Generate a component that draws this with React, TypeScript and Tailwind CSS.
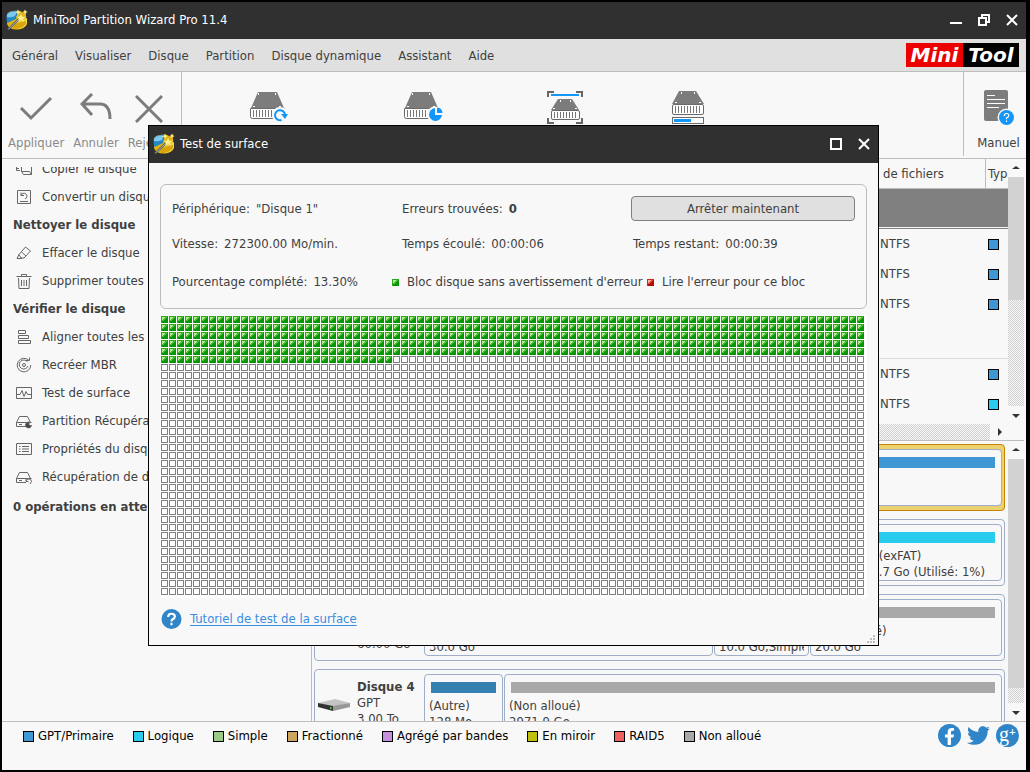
import type { ReactNode } from "react";
import { FaFacebookF, FaTwitter } from "react-icons/fa";
import clsx from "clsx";

const HATCH =
  "bg-[conic-gradient(#d0d0d0_25%,#f8f8f8_0_50%,#d0d0d0_0_75%,#f8f8f8_0)] bg-[length:2px_2px]";

const menus = ["Général", "Visualiser", "Disque", "Partition", "Disque dynamique", "Assistant", "Aide"];

const legend = [
  { label: "GPT/Primaire", color: "bg-[#3f97d4]" },
  { label: "Logique", color: "bg-[#29ccec]" },
  { label: "Simple", color: "bg-[#99cb85]" },
  { label: "Fractionné", color: "bg-[#cca65c]" },
  { label: "Agrégé par bandes", color: "bg-[#c48fdb]" },
  { label: "En miroir", color: "bg-[#bfbf10]" },
  { label: "RAID5", color: "bg-[#f0605f]" },
  { label: "Non alloué", color: "bg-[#a9a9a9]" },
];

const AppIcon = () => (
  <svg width="22" height="22" viewBox="0 0 22 22" className="shrink-0">
    <path d="M1 6 C1 2 9 1 14 2 L20 5 V15 C20 19 14 21 9 20.500 C4 20 1 17 1 14Z" fill="#e3b411" />
    <path d="M0.500 7 C0.500 3 6 1.500 12 2 L10 10 L1.500 14 C0.700 12 0.500 10 0.500 7Z" fill="#2486c4" />
    <path d="M1 6 C2 3 7 2 11 2.500 L9 7 C6 8.500 3 8.500 1 8Z" fill="#7cc8ee" />
    <path d="M9 12 L21 9 V15 C20 18 15 20 10 20Z" fill="#f7d63c" />
    <path d="M7 15 L20 12 V15 C18 18 13 20 8 20Z" fill="#d9a50c" />
    <path d="M2 20.500 L14 9" stroke="#48545a" strokeWidth="2" />
    <path d="M2.500 20 L13 10" stroke="#c5d0d4" strokeWidth="0.800" />
    <path d="M15 4 L16.500 7.500 L20.500 7.500 L17.500 10 L18.500 13.500 L15 11.500 L12 13.500 L12.800 10 L10 7.500 L13.700 7.300Z" fill="#fff08a" stroke="#b58a12" strokeWidth="0.300" />
    <path d="M12 0.500 L13 2.500 L15 3 L13 4 L12.500 6 L11 4 L9 3.500 L11 2.500Z M19 0.500 L20 2.200 L21.500 3 L20 4 L19 5.500 L18 4 L16.500 3 L18 2.200Z" fill="#ffe77a" />
  </svg>
);

const Logo = () => (
  <div className="flex h-6 items-center text-xl font-bold italic leading-6 text-white font-['DejaVu_Sans',sans-serif]">
    <span className="w-[57px] bg-[#ec0000] text-center leading-6">Mini</span>
    <span className="w-14 bg-black text-center leading-6">Tool</span>
  </div>
);

/* drive seen from the front, shared by the toolbar buttons */
const Drive = () => (
  <g>
    <path d="M8 0 H27 L34 16 H1Z" fill="#7c7c7c" />
    <path d="M8 1 h1 v2 h-1z M25 1 h1 v2 h-1z M3 14 h2 v1 h-2z M29 14 h2 v1 h-2z" fill="#fff" />
    <path d="M0.500 16.500 H34.500 V24.500 Q34.500 26.500 32.500 26.500 H2.500 Q0.500 26.500 0.500 24.500Z" fill="#fff" stroke="#6a6a6a" />
    <path d="M3.500 18 V25 M6.500 18 V25 M9.500 18 V25 M12.500 18 V25 M15.500 18 V25 M18.500 18 V25 M21.500 18 V25 M24.500 18 V25 M27.500 18 V25 M30.500 18 V25" stroke="#777" />
  </g>
);

const DriveRefresh = () => (
  <svg width="38" height="30" viewBox="0 0 38 30">
    <Drive />
    <circle cx="30" cy="23" r="8" fill="#f8f8f8" />
    <path d="M31.500 28 A5 5 0 1 1 35 22.500" fill="none" stroke="#1296fa" strokeWidth="2" />
    <path d="M31 22 H38 L35 27Z" fill="#1296fa" />
  </svg>
);

const DrivePie = () => (
  <svg width="39" height="30" viewBox="0 0 39 30">
    <Drive />
    <circle cx="31" cy="22.500" r="8" fill="#f8f8f8" />
    <path d="M31 16 V23 H38 A6.500 6.500 0 1 1 31 16Z" fill="#1296fa" />
    <path d="M33 15.500 A6 6 0 0 1 38.500 21 H33Z" fill="#1296fa" />
  </svg>
);

const DriveScan = () => (
  <svg width="36" height="33" viewBox="0 0 36 33">
    <path d="M7 1 H1 V6 M29 1 H35 V6 M7 32 H1 V27 M29 32 H35 V27" fill="none" stroke="#666" strokeWidth="2" />
    <rect x="4" y="3" width="28" height="2" fill="#1296fa" />
    <path d="M11 8 H25 L32 19 H4Z" fill="#7c7c7c" />
    <path d="M13 9 h1 v2 h-1z M23 9 h1 v2 h-1z M6 17 h2 v1 h-2z M28 17 h2 v1 h-2z" fill="#fff" />
    <rect x="4.500" y="19.500" width="28" height="9" rx="1.500" fill="#fff" stroke="#6a6a6a" />
    <path d="M7.500 21 V27 M10.500 21 V27 M13.500 21 V27 M16.500 21 V27 M19.500 21 V27 M22.500 21 V27 M25.500 21 V27 M28.500 21 V27" stroke="#777" />
  </svg>
);

const DriveProgress = () => (
  <svg width="32" height="33" viewBox="0 0 32 33">
    <path d="M7 0 H24 L32 13 H0Z" fill="#7c7c7c" />
    <path d="M9 1 h1 v2 h-1z M22 1 h1 v2 h-1z M3 11 h2 v1 h-2z M27 11 h2 v1 h-2z" fill="#fff" />
    <rect x="0.500" y="13.500" width="31" height="10" rx="1.500" fill="#fff" stroke="#6a6a6a" />
    <path d="M3.500 15 V22 M6.500 15 V22 M9.500 15 V22 M12.500 15 V22 M15.500 15 V22 M18.500 15 V22 M21.500 15 V22 M24.500 15 V22 M27.500 15 V22" stroke="#777" />
    <rect x="0.500" y="26.500" width="31" height="6" fill="#fff" stroke="#6a6a6a" />
    <rect x="2" y="28" width="17" height="3" fill="#1296fa" />
  </svg>
);

const ManualIcon = () => (
  <svg width="30" height="35" viewBox="0 0 30 35">
    <rect width="24" height="31" rx="2" fill="#7c7c7c" />
    <path d="M3 5.500 H11 M3 9.500 H21 M3 13.500 H21 M3 17.500 H15" stroke="#fff" />
    <circle cx="22.500" cy="27.500" r="9" fill="#f8f8f8" />
    <circle cx="22.500" cy="27.500" r="7.500" fill="#1296fa" />
    <path d="M20.300 26 Q20.300 23.500 22.500 23.500 Q24.800 23.500 24.800 25.500 Q24.800 27 22.500 28 V29.300 M22.500 30.500 V32" fill="none" stroke="#fff" strokeWidth="1.200" />
  </svg>
);

const SideIcon = ({ children }: { children: ReactNode }) => (
  <svg width="16" height="16" viewBox="0 0 16 16" fill="none" stroke="#666" className="shrink-0">
    {children}
  </svg>
);

const driveBody = <path d="M0.500 9.500 L3.500 3.500 H11.500 L14.500 9.500 M0.500 9.500 H15.500 M0.500 9.500 V13.500 H10 M3 11.500 H6" />;

const sideItems: { label: string; icon?: ReactNode }[] = [
  { label: "Copier le disque", icon: <path d="M4 4.500 H0.500 V9.500 H4 M1 7.500 H3 M5.500 2 V10.500 L7.500 13.500 H15.500 V2 M5.500 10.500 H13.500 L15.500 13.500" /> },
  { label: "Convertir un disque", icon: <path d="M1.500 1.500 H14.500 V14.500 H1.500Z M4 12.500 H12 M5 6.500 A3 3 0 1 1 9 10 M5 3.500 V6.500 H8" /> },
  { label: "Nettoyer le disque" },
  { label: "Effacer le disque", icon: <path d="M3 9.500 L9.500 2 L14.500 6 L8 13 H5Z M5.500 7 L10 11 M3 9.500 L1 13.500 H6" /> },
  { label: "Supprimer toutes les", icon: <path d="M0.500 3.500 H15.500 M5.500 3 V1.500 H10.500 V3 M2.500 5 L3 15.500 H13 L13.500 5 M5.500 7 V13 M8 7 V13 M10.500 7 V13" /> },
  { label: "Vérifier le disque" },
  { label: "Aligner toutes les partitions", icon: <path d="M2.500 1.500 H9.500 V4.500 H2.500Z M2.500 6.500 H12.500 V9.500 H2.500Z M2.500 11.500 H14.500 V14.500 H2.500Z" /> },
  {
    label: "Recréer MBR",
    icon: (
      <>
        <path d="M13 3.500 A6.800 6.800 0 1 0 14.800 8 M10 3.500 H13.500 V0.500 M11.500 5 A4.500 4.500 0 1 0 12 9" />
        <circle cx="8" cy="8" r="1.500" />
      </>
    ),
  },
  { label: "Test de surface", icon: <path d="M0.500 2.500 H15.500 V13.500 H0.500Z M1 9.500 H4 L6 5.500 L8 11.500 L10 6.500 L11.500 9.500 H15" /> },
  { label: "Partition Récupération", icon: <>{driveBody}<path d="M13 9 a3 3 0 1 0 2.500 3.500 h-2.500z" fill="#444" /></> },
  { label: "Propriétés du disque", icon: <path d="M0.500 2.500 H15.500 V13.500 H0.500Z M3 5.500 H4.500 M6 5.500 H13 M3 8 H4.500 M6 8 H13 M3 10.500 H4.500 M6 10.500 H13" /> },
  { label: "Récupération de données", icon: <>{driveBody}<path d="M10 12 A2.800 2.800 0 0 1 15.500 12.500 L14 15 M10 10 V12.500 H12.500" /></> },
];

const ToolButton = ({ label, className, children }: { label?: string; className?: string; children: ReactNode }) => (
  <button className={clsx("flex flex-col items-center", className)}>
    <span className="flex h-[70px] items-center">{children}</span>
    {label && <span className="-mt-[7px] leading-4">{label}</span>}
  </button>
);

const Arrow = ({ dir, className }: { dir: "up" | "down" | "right"; className?: string }) => (
  <button aria-label={dir} className={clsx("flex shrink-0 items-center justify-center", className)}>
    <svg width="8" height="8" viewBox="0 0 8 8" fill="#333">
      {dir === "up" && <path d="M0 5 L4 2 L8 5Z" />}
      {dir === "down" && <path d="M0 3 L4 7 L8 3Z" />}
      {dir === "right" && <path d="M3 0 L7 4 L3 8Z" />}
    </svg>
  </button>
);

const ScrollBar = ({ thumb }: { thumb: string }) => (
  <div className="flex w-4 shrink-0 flex-col">
    <Arrow dir="up" className="h-[18px]" />
    <div className={clsx("flex-1", HATCH)}>
      <div className={clsx("bg-[#d2d2d2]", thumb)} />
    </div>
    <Arrow dir="down" className="h-[18px]" />
  </div>
);

const Swatch = ({ color }: { color: string }) => (
  <span className={clsx("block size-[11px] border border-black", color)} />
);

const DiskRow = ({ selected }: { selected?: boolean }) => (
  <tr>
    <td colSpan={3} className={clsx("border-b pb-px", selected ? "border-[#808080]" : "border-[#dcdce4]")}>
      <div className={clsx("h-[38px]", selected && "bg-[#808080]")} />
    </td>
  </tr>
);

const FsRow = ({ color }: { color: string }) => (
  <tr className="h-[30px]">
    <td />
    <td className="pl-px">NTFS</td>
    <td className="pl-[2px]">
      <Swatch color={color} />
    </td>
  </tr>
);

const PartitionTable = () => (
  <div className="flex h-[282px] border-b border-[#bdbdbd]">
    <div className="flex min-w-0 flex-1 flex-col justify-between overflow-hidden">
      <table className="w-full table-fixed border-separate border-spacing-0">
        <colgroup>
          <col />
          <col className="w-[107px]" />
          <col className="w-[22px]" />
        </colgroup>
        <thead>
          <tr className="h-[30px]">
            <th className="border-b border-[#bdbdbd]" />
            <th className="border-b border-r border-[#bdbdbd] pl-1 text-left font-normal">de fichiers</th>
            <th className="overflow-hidden border-b border-[#bdbdbd] pl-[2px] text-left font-normal">Type</th>
          </tr>
        </thead>
        <tbody>
          <DiskRow selected />
          <FsRow color="bg-[#3f97d4]" />
          <FsRow color="bg-[#3f97d4]" />
          <FsRow color="bg-[#3f97d4]" />
          <DiskRow />
          <FsRow color="bg-[#3f97d4]" />
          <FsRow color="bg-[#29ccec]" />
        </tbody>
      </table>
      <div className="flex h-4">
        <div className={clsx("flex-1", HATCH)} />
        <Arrow dir="right" className="w-[18px]" />
      </div>
    </div>
    <div className="flex pb-4">
      <ScrollBar thumb="h-[123px]" />
    </div>
  </div>
);

const DiskCard = ({ selected, info, children }: { selected?: boolean; info?: ReactNode; children: ReactNode }) => (
  <div
    className={clsx(
      "flex h-[67px] shrink-0 rounded border py-1 pr-[2px]",
      selected ? "border-[#c88400] bg-[#ecd170]" : "border-[#9fadc8]"
    )}
  >
    <div className="flex w-[109px] shrink-0 items-start leading-4">{info}</div>
    <div className="flex min-w-0 flex-1 gap-px">{children}</div>
  </div>
);

const Partition = ({ bar, className, children }: { bar?: string; className: string; children?: ReactNode }) => (
  <div className={clsx("overflow-hidden rounded border border-[#9fadc8] bg-[#f8f8f8] pt-[7px] leading-4", className)}>
    <div className={clsx("mx-[6px] h-[11px]", bar)} />
    <div className="mx-1 mt-[5px] overflow-hidden whitespace-nowrap">{children}</div>
  </div>
);

const DiskMap = () => (
  <div className="flex min-h-0 flex-1">
    <div className="flex min-w-0 flex-1 flex-col gap-2 overflow-hidden pl-[2px] pr-[3px] pt-[3px]">
      <DiskCard selected>
        <Partition bar="bg-[#3f97d4]" className="flex-1" />
      </DiskCard>
      <DiskCard>
        <Partition bar="bg-[#29ccec]" className="flex-1">
          <div className="flex justify-end pr-3">
            <p>
              (exFAT)
              <br />
              .7 Go (Utilisé: 1%)
            </p>
          </div>
        </Partition>
      </DiskCard>
      <DiskCard info={<p className="mt-[37px] pl-[42px]">60.00 Go</p>}>
        <Partition bar="bg-[#a9a9a9]" className="w-[289px]">
          <br />
          30.0 Go
        </Partition>
        <Partition bar="bg-[#a9a9a9]" className="w-[95px]">
          <br />
          10.0 Go,Simple
        </Partition>
        <Partition bar="bg-[#a9a9a9]" className="flex-1">
          (Non alloué)
          <br />
          20.0 Go
        </Partition>
      </DiskCard>
      <DiskCard
        info={
          <>
            <svg width="34" height="16" viewBox="0 0 34 16" className="mx-[2px] mt-6">
              <path d="M1 5 L18 1 L33 5 L16 9Z" fill="#c4c4c4" />
              <path d="M1 5 L16 8 V13 L1 9Z" fill="#333" />
              <path d="M16 8 L33 5 V9 L16 13Z" fill="#989898" />
              <path d="M13 9 h1.500 v2 h-1.500z" fill="#4fd04f" />
            </svg>
            <p className="mt-[5px] pl-1">
              <b>Disque 4</b>
              <br />
              GPT
              <br />
              3.00 To
            </p>
          </>
        }
      >
        <Partition bar="bg-[#3580b0]" className="w-[79px]">
          (Autre)
          <br />
          128 Mo
        </Partition>
        <Partition bar="bg-[#a9a9a9]" className="flex-1">
          (Non alloué)
          <br />
          2971.9 Go
        </Partition>
      </DiskCard>
    </div>
    <ScrollBar thumb="h-[229px]" />
  </div>
);

const Marker = ({ red }: { red?: boolean }) => (
  <svg width="7" height="7" viewBox="0 0 7 7" shapeRendering="crispEdges">
    <rect width="7" height="7" fill={red ? "#b80c00" : "#0c9408"} />
    <path d="M0 0 H7 V1 H1 V7 H0Z" fill={red ? "#d02818" : "#28a81c"} />
    <path d="M4 1 H6 V2 H4Z M3 2 H5 V3 H3Z M2 3 H4 V4 H2Z M1 4 H3 V5 H1Z" fill={red ? "#e04838" : "#50c038"} />
    <path d="M1 1 H4 V2 H3 V3 H2 V4 H1Z" fill={red ? "#ffb0a0" : "#b0f098"} />
  </svg>
);

/* 88 x 35 blocks on an 8px pitch, 5 full rows and 29 blocks are done */
const BlockMap = () => (
  <svg width="703" height="279" shapeRendering="crispEdges" className="block">
    <defs>
      <pattern id="todo" width="8" height="8" patternUnits="userSpaceOnUse">
        <rect width="8" height="8" fill="#fff" />
        <path d="M0 0 H7 V7 H0Z M1 1 V6 H6 V1Z" fill="#808080" fillRule="evenodd" />
      </pattern>
      <pattern id="done" width="8" height="8" patternUnits="userSpaceOnUse">
        <rect width="8" height="8" fill="#fff" />
        <Marker />
      </pattern>
    </defs>
    <rect width="703" height="279" fill="url(#todo)" />
    <rect width="703" height="40" fill="url(#done)" />
    <rect y="40" width="232" height="8" fill="url(#done)" />
  </svg>
);

const Field = ({ label, children }: { label: string; children: ReactNode }) => (
  <p className="flex gap-[6px]">
    <span>{label}</span>
    <span>{children}</span>
  </p>
);

const SurfaceTest = () => (
  <section role="dialog" aria-label="Test de surface" className="absolute left-[148px] top-[125px] w-[731px] border border-black bg-[#f8f8f8]">
    <header className="flex h-[37px] items-center bg-[#303030] pb-[2px] pl-1 pr-2 text-white">
      <AppIcon />
      <h2 className="ml-[5px] flex-1">Test de surface</h2>
      <button aria-label="Agrandir" className="mr-4 size-3 border-2 border-white" />
      <button aria-label="Fermer">
        <svg width="12" height="12" viewBox="0 0 12 12" stroke="#fff" strokeWidth="2">
          <path d="M1 1 L11 11 M11 1 L1 11" />
        </svg>
      </button>
    </header>
    <div className="px-[11px] pt-[21px]">
      <div className="h-[125px] rounded-md border border-[#bdbdbd] px-[11px] pt-[11px]">
        <div className="grid grid-cols-[230px_229px_1fr] items-center">
          <Field label="Périphérique:">"Disque 1"</Field>
          <Field label="Erreurs trouvées:">
            <b>0</b>
          </Field>
          <button className="h-[25px] rounded-sm border border-[#808080] bg-[#e0e0e0]">Arrêter maintenant</button>
        </div>
        <div className="mt-[13px] grid grid-cols-[230px_231px_1fr] leading-5">
          <Field label="Vitesse:">272300.00 Mo/min.</Field>
          <Field label="Temps écoulé:">00:00:06</Field>
          <Field label="Temps restant:">00:00:39</Field>
        </div>
        <div className="mt-[18px] grid grid-cols-[220px_255px_1fr] leading-5">
          <Field label="Pourcentage complété:">13.30%</Field>
          <p className="flex items-center gap-2">
            <Marker />
            Bloc disque sans avertissement d'erreur
          </p>
          <p className="flex items-center gap-2">
            <Marker red />
            Lire l'erreur pour ce bloc
          </p>
        </div>
      </div>
      <div className="mt-[6px] bg-white pb-[3px] pl-px pt-px">
        <BlockMap />
      </div>
      <div className="relative flex h-[47px] items-start pl-px pt-[10px]">
        <svg width="21" height="22" viewBox="0 0 22 22">
          <circle cx="11" cy="11" r="10.500" fill="#2f85c8" />
          <path d="M7.500 9 Q7.500 5.500 11 5.500 Q14.500 5.500 14.500 8.300 Q14.500 10 12.500 11 Q11 11.800 11 13.500 M11 15 V17.500" fill="none" stroke="#fff" strokeWidth="2.200" />
        </svg>
        <a href="#tutoriel" className="ml-2 leading-[22px] text-[#3a8ee0] underline underline-offset-2">
          Tutoriel de test de la surface
        </a>
        <svg width="8" height="8" viewBox="0 0 8 8" fill="#bdbdbd" className="absolute -right-2 bottom-[2px]">
          <path d="M6 0h2v2h-2z M3 3h2v2h-2z M6 3h2v2h-2z M0 6h2v2h-2z M3 6h2v2h-2z M6 6h2v2h-2z" />
        </svg>
      </div>
    </div>
  </section>
);

export default function App() {
  return (
    <div className="relative h-screen bg-black pb-[2px] pl-[2px] pr-1 pt-[2px] text-[13px] leading-5 text-[#404040] font-['DejaVu_Sans_Condensed','Noto_Sans',sans-serif]">
      <div className="flex h-full flex-col overflow-hidden bg-[#f8f8f8]">
        <header className="flex h-[37px] shrink-0 items-center bg-[#303030] pb-[2px] pl-1 pr-2 text-white">
          <AppIcon />
          <h1 className="ml-[5px] flex-1">MiniTool Partition Wizard Pro 11.4</h1>
          <div className="flex items-center gap-4">
            <button aria-label="Réduire" className="h-2 w-3 border-b-2 border-white" />
            <button aria-label="Restaurer">
              <svg width="12" height="12" viewBox="0 0 12 12" fill="none" stroke="#fff" strokeWidth="2">
                <path d="M1 4 H8 V11 H1Z M4 4 V1 H11 V8 H8" />
              </svg>
            </button>
            <button aria-label="Fermer">
              <svg width="12" height="12" viewBox="0 0 12 12" stroke="#fff" strokeWidth="2">
                <path d="M1 1 L11 11 M11 1 L1 11" />
              </svg>
            </button>
          </div>
        </header>

        <nav className="flex h-[33px] shrink-0 items-center justify-between border-b border-[#bdbdbd] bg-[#e0e0e0] pl-[10px] pr-[7px]">
          <div className="flex gap-[17px] pt-[2px]">
            {menus.map((m) => (
              <button key={m}>{m}</button>
            ))}
          </div>
          <Logo />
        </nav>

        <div className="flex h-[87px] shrink-0 border-b border-[#bdbdbd]">
          <div className="flex w-[180px] gap-[9px] overflow-hidden border-r border-[#bdbdbd] pl-[6px] text-[#8a8a8a]">
            <ToolButton label="Appliquer">
              <svg width="34" height="30" viewBox="0 0 34 30" fill="none" stroke="#7c7c7c" strokeWidth="3">
                <path d="M2 16 L12 26 L32 6" />
              </svg>
            </ToolButton>
            <ToolButton label="Annuler">
              <svg width="32" height="28" viewBox="0 0 32 28" fill="none" stroke="#7c7c7c" strokeWidth="3">
                <path d="M12 1 L2 11 L12 22 M2 11 H20 Q30 11 30 26" />
              </svg>
            </ToolButton>
            <ToolButton label="Rejeter">
              <svg width="28" height="32" viewBox="0 0 28 32" stroke="#7c7c7c" strokeWidth="3">
                <path d="M1 5 L27 31 M27 5 L1 31" />
              </svg>
            </ToolButton>
          </div>
          <div className="flex flex-1 pl-[9px]">
            <ToolButton className="w-[155px]">
              <DriveRefresh />
            </ToolButton>
            <ToolButton className="w-[155px]">
              <DrivePie />
            </ToolButton>
            <ToolButton className="w-32">
              <DriveScan />
            </ToolButton>
            <ToolButton className="w-[118px]">
              <DriveProgress />
            </ToolButton>
          </div>
          <ToolButton label="Manuel" className="mb-[2px] w-[63px] border-l border-[#bdbdbd] pl-[7px]">
            <ManualIcon />
          </ToolButton>
        </div>

        <div className="flex min-h-0 flex-1 pr-[2px]">
          <aside className="w-[310px] shrink-0 border-r border-[#bdbdbd] pt-2">
            <div className="overflow-hidden">
              <ul className="-mt-3">
                {sideItems.map(({ label, icon }) => (
                  <li key={label} className={clsx("flex h-7 items-center whitespace-nowrap", icon ? "gap-[10px] pl-[14px]" : "pl-[11px] font-bold")}>
                    {icon && <SideIcon>{icon}</SideIcon>}
                    {label}
                  </li>
                ))}
              </ul>
              <p className="mt-[6px] pl-[11px] font-bold">0 opérations en attente</p>
            </div>
          </aside>
          <main className="flex min-w-0 flex-1 flex-col">
            <PartitionTable />
            <DiskMap />
          </main>
        </div>

        <footer className="flex h-[49px] shrink-0 items-start justify-between border-t border-[#bdbdbd] pl-[21px] pr-[7px] text-black">
          <ul className="flex gap-[19px] pt-1">
            {legend.map(({ label, color }) => (
              <li key={label} className="flex items-center gap-1">
                <Swatch color={color} />
                {label}
              </li>
            ))}
          </ul>
          <div className="flex items-center gap-[6px] pt-[2px]">
            <a href="#facebook" aria-label="Facebook" className="flex size-[23px] items-end justify-center rounded-full bg-[#2f85c8] pb-[2px]">
              <FaFacebookF size={17} color="#fff" />
            </a>
            <a href="#twitter" aria-label="Twitter">
              <FaTwitter size={23} color="#2f85c8" />
            </a>
            <a
              href="#google"
              aria-label="Google+"
              className="flex size-[23px] items-center justify-center rounded-full bg-[#2f85c8] text-xl leading-none text-white font-['Liberation_Serif',serif]"
            >
              <span className="-mt-1">g</span>
              <span className="-mt-2 text-xs font-bold">+</span>
            </a>
          </div>
        </footer>
      </div>
      <SurfaceTest />
    </div>
  );
}
